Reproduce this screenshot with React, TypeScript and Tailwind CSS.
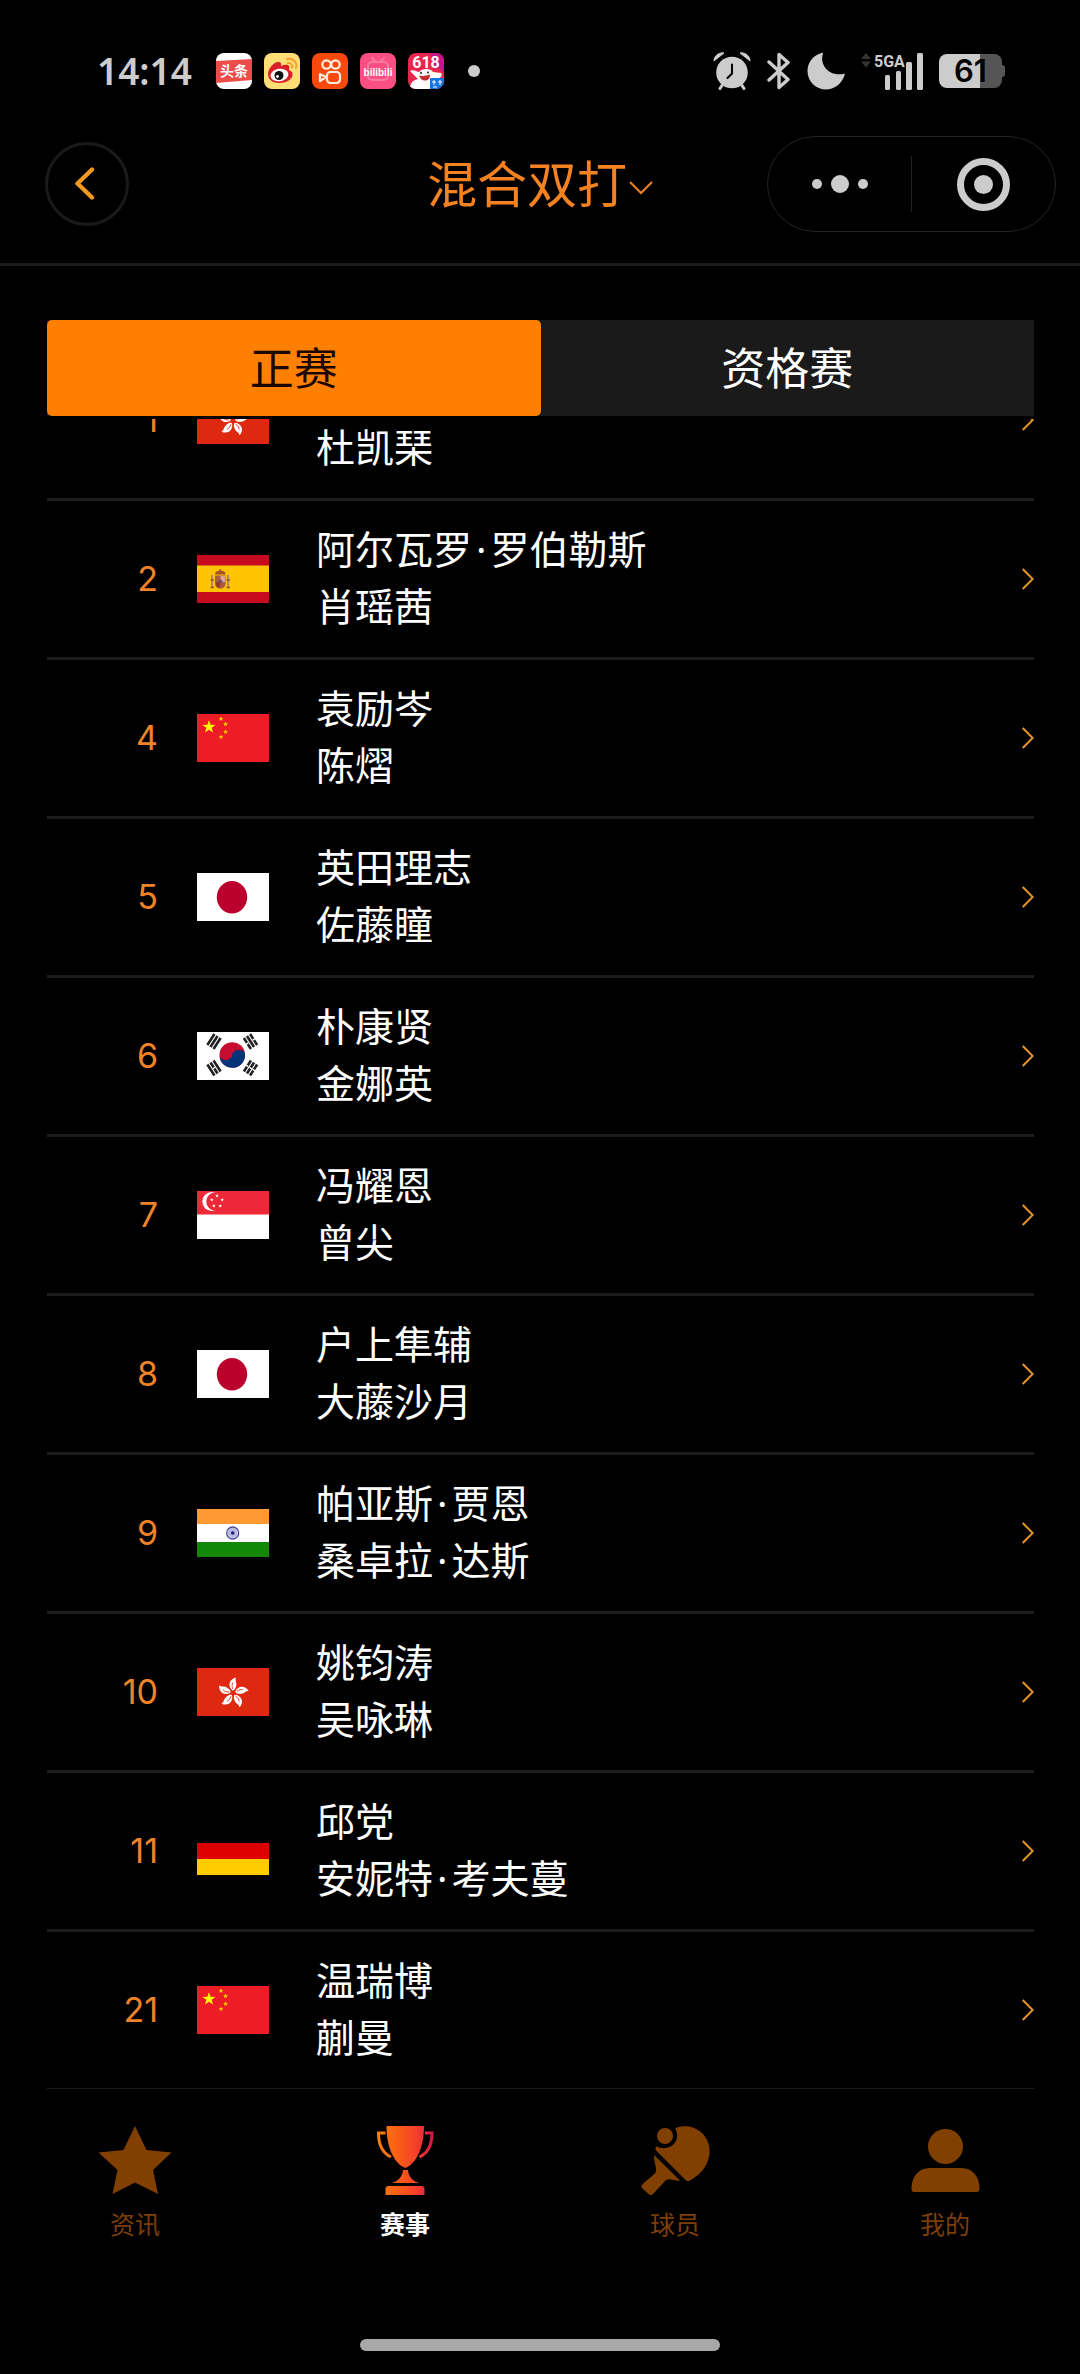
import React, { useState } from "react";

type Country = "hk" | "es" | "cn" | "jp" | "kr" | "sg" | "in" | "de";

const pairs: { rank: number; country: Country; names: string[] }[] = [
  { rank: 1, country: "hk", names: ["", "杜凯琹"] },
  { rank: 2, country: "es", names: ["阿尔瓦罗·罗伯勒斯", "肖瑶茜"] },
  { rank: 4, country: "cn", names: ["袁励岑", "陈熠"] },
  { rank: 5, country: "jp", names: ["英田理志", "佐藤瞳"] },
  { rank: 6, country: "kr", names: ["朴康贤", "金娜英"] },
  { rank: 7, country: "sg", names: ["冯耀恩", "曾尖"] },
  { rank: 8, country: "jp", names: ["户上隼辅", "大藤沙月"] },
  { rank: 9, country: "in", names: ["帕亚斯·贾恩", "桑卓拉·达斯"] },
  { rank: 10, country: "hk", names: ["姚钧涛", "吴咏琳"] },
  { rank: 11, country: "de", names: ["邱党", "安妮特·考夫蔓"] },
  { rank: 21, country: "cn", names: ["温瑞博", "蒯曼"] },
];

// Five pointed star around (cx, cy)
const star = (cx: number, cy: number, r: number) =>
  Array.from({ length: 10 }, (_, i) => {
    const a = (Math.PI / 5) * i - Math.PI / 2;
    const d = i % 2 ? r * 0.4 : r;
    return `${(cx + d * Math.cos(a)).toFixed(2)},${(cy + d * Math.sin(a)).toFixed(2)}`;
  }).join(" ");

const trigrams = [
  { x: 17, y: 9.5, turn: -57, broken: [] as number[] },
  { x: 53.5, y: 9.5, turn: 57, broken: [-4, 4] },
  { x: 17, y: 36, turn: 57, broken: [0] },
  { x: 53.5, y: 36, turn: -57, broken: [-4, 0, 4] },
];

const flags: Record<Country, React.ReactNode> = {
  hk: (
    <>
      <rect width="72" height="48" fill="#de2910" />
      {[0, 72, 144, 216, 288].map((deg) => (
        <g key={deg} transform={`rotate(${deg} 36 25)`}>
          <path d="M35.500 22.500C31 19 31 11.500 39 9.500C37.500 12.500 40.500 14.500 39 18.500C38.300 21 37 22.500 35.500 22.500Z" fill="#fff" />
          <path d="M35.800 21C34.800 18.500 34.800 16.500 36 14.500" stroke="#de2910" strokeWidth="0.8" fill="none" />
        </g>
      ))}
    </>
  ),
  es: (
    <>
      <rect width="72" height="48" fill="#c60b1e" />
      <rect y="10.500" width="72" height="26.500" fill="#ffc400" />
      <path d="M15 20v13M31 20v13" stroke="#b08a5a" strokeWidth="2" />
      <path d="M13.500 25h3.500M29.500 25h3.500M13.500 32.500h3.500M29.500 32.500h3.500" stroke="#a0522d" strokeWidth="1.500" />
      <path d="M18 20.500h10.500v8c0 3-2 5-5.250 5s-5.250-2-5.250-5z" fill="#ad5a3c" />
      <path d="M23.500 21h4.500v6h-4.500z" fill="#d9a79a" />
      <path d="M18.500 27h4.500v5.500c-3-.5-4.500-2-4.500-5.500z" fill="#8f3d20" />
      <circle cx="23.300" cy="26.500" r="2" fill="#7a4a6a" />
      <path d="M18 19.500c0-3 2.500-4 5.250-4s5.250 1 5.250 4z" fill="#a3502b" />
      <path d="M23.250 14v3" stroke="#a3502b" strokeWidth="1.200" />
    </>
  ),
  cn: (
    <>
      <rect width="72" height="48" fill="#ee1c25" />
      <polygon points={star(12, 13, 6.8)} fill="#ffff00" />
      {[[24, 4.8], [28.600, 10.200], [28.600, 17.800], [24, 23]].map(([x, y]) => (
        <polygon key={y} points={star(x, y, 2.6)} fill="#ffd800" />
      ))}
    </>
  ),
  jp: (
    <>
      <rect width="72" height="48" fill="#fff" />
      <ellipse cx="35" cy="24.300" rx="15.200" ry="16.200" fill="#bc002d" />
    </>
  ),
  kr: (
    <>
      <rect width="72" height="48" fill="#fff" />
      <g transform="rotate(-4 35.300 23)">
        <circle cx="35.300" cy="23" r="12.800" fill="#c60c30" />
        <path d="M22.500 23a6.400 4.500 0 0 0 12.800 0a6.400 4.500 0 0 1 12.800 0a12.800 12.800 0 0 1-25.600 0z" fill="#003478" />
      </g>
      {trigrams.map((t) => (
        <g key={`${t.x}-${t.y}`} transform={`translate(${t.x} ${t.y}) rotate(${t.turn})`}>
          <path d="M-6.500 -3.700h13M-6.500 0h13M-6.500 3.700h13" stroke="#222" strokeWidth="2.600" />
          {t.broken.map((y) => (
            <path key={y} d={`M-0.700 ${y}h1.400`} stroke="#fff" strokeWidth="2.800" />
          ))}
        </g>
      ))}
    </>
  ),
  sg: (
    <>
      <rect width="72" height="48" fill="#fff" />
      <rect width="72" height="23.500" fill="#ed2939" />
      <circle cx="14.800" cy="10.500" r="9.500" fill="#fff" />
      <circle cx="18.500" cy="10.500" r="9.300" fill="#ed2939" />
      {[[20, 4.8], [25.200, 8.800], [23.200, 15], [16.800, 15], [14.800, 8.800]].map(([x, y]) => (
        <polygon key={`${x}-${y}`} points={star(x, y, 2)} fill="#fff" />
      ))}
    </>
  ),
  in: (
    <>
      <rect width="72" height="48" fill="#fff" />
      <rect width="72" height="15" fill="#ff9933" />
      <rect y="33" width="72" height="15" fill="#138808" />
      <circle cx="35.700" cy="24" r="5" fill="#b9b9de" />
      <circle cx="35.700" cy="24" r="6" fill="none" stroke="#4a4aa0" strokeWidth="1.300" />
      <circle cx="35.700" cy="24" r="1.800" fill="#20207c" />
    </>
  ),
  de: (
    <>
      <rect width="72" height="48" fill="#000" />
      <rect y="16" width="72" height="16" fill="#dd0000" />
      <rect y="32" width="72" height="16" fill="#ffcc00" />
    </>
  ),
};

const StatusBar = () => (
  <div className="flex items-center justify-between pt-12 pl-[97px] pr-[75px] text-[#cccccc]">
    <div className="flex h-[46px] items-center">
      <span className="text-[37px] leading-[44px] font-semibold">14:14</span>
      <div className="ml-6 flex gap-3">
        <svg className="h-9 w-9 rounded-lg" viewBox="0 0 36 36">
          <rect width="36" height="36" fill="#fff" />
          <path d="M0 8L36 6V27L0 30z" fill="#ec4c4a" />
          <text x="18" y="23" textAnchor="middle" fontSize="14" fontWeight="700" fill="#fff" fontFamily="Noto Sans CJK SC, sans-serif">头条</text>
        </svg>
        <svg className="h-9 w-9 rounded-lg" viewBox="0 0 36 36">
          <rect width="36" height="36" fill="#ffdf75" />
          <path d="M23 6c5-1.500 11 3 9 9" stroke="#f2a12b" strokeWidth="2" fill="none" strokeLinecap="round" />
          <path d="M24 10c3-.5 5 2 4 4.500" stroke="#f2a12b" strokeWidth="2" fill="none" strokeLinecap="round" />
          <path d="M4 21c0-6 7-13 11-12c3 .5 2 3 2 4c3-1.500 7-2 8 0c.7 1.300 0 3 0 4c3 1 4 3 3.500 5.500C27.500 27 22 30 15.500 30S4 27 4 21z" fill="#d9202a" />
          <ellipse cx="15.500" cy="22" rx="9" ry="6.300" fill="#fff" transform="rotate(-8 15.500 22)" />
          <circle cx="15" cy="22.500" r="4.500" fill="#111" />
          <circle cx="13.500" cy="23.500" r="1.400" fill="#fff" />
        </svg>
        <svg className="h-9 w-9 rounded-lg" viewBox="0 0 36 36" fill="none" stroke="#ffeee0" strokeWidth="2.200">
          <rect width="36" height="36" fill="#f8490c" stroke="none" />
          <circle cx="14.500" cy="11.500" r="4.200" />
          <circle cx="23.500" cy="11.500" r="4.200" />
          <rect x="15" y="19" width="13" height="11" rx="3.500" />
          <path d="M14 24l-6-2.800v7z" strokeLinejoin="round" />
        </svg>
        <svg className="h-9 w-9 rounded-lg" viewBox="0 0 36 36">
          <rect width="36" height="36" fill="#fb4f83" />
          <path d="M12 5l4 4M24 5l-4 4" stroke="#fb7aa2" strokeWidth="2" strokeLinecap="round" />
          <rect x="8" y="9" width="20" height="18" rx="4" fill="none" stroke="#fb7aa2" strokeWidth="2" />
          <text x="18" y="23" textAnchor="middle" fontSize="10" fontWeight="700" fill="#fff" fontFamily="Liberation Sans, sans-serif">bilibili</text>
        </svg>
        <svg className="h-9 w-9 rounded-lg" viewBox="0 0 36 36">
          <rect width="36" height="36" fill="#e8264b" />
          <path d="M22 0h14v20L26 12z" fill="#c3158c" />
          <path d="M2 36c0-7 4-9 8-10l-8-8c3-2 7 1 9 1c3-4 12-4 14 0l8 1c2 2 0 5-5 7l2 9z" fill="#fff" />
          <circle cx="13" cy="20" r="1" fill="#222" />
          <circle cx="20" cy="19.500" r="1" fill="#222" />
          <path d="M11 22.500c4 1 8 0 11-1c0 4-2 6-5 6s-5-2-6-5z" fill="#c02f33" />
          <text x="18" y="15" textAnchor="middle" fontSize="16" fontWeight="700" fill="#fff" fontFamily="Roboto, sans-serif">618</text>
          <rect x="22" y="25" width="14" height="11" fill="#1673e0" />
          <path d="M24 29h4M26 27v5M30 29h4M32 27v5M25 34h4" stroke="#fff" strokeWidth="1" />
        </svg>
      </div>
      <span className="ml-6 h-3 w-3 rounded-full bg-[#cccccc]" />
    </div>

    <div className="flex h-[46px] items-center">
      <svg className="h-[38px] w-[38px]" viewBox="0 0 38 38">
        <path d="M1 9C1 4 6 0 11 1zM37 9C37 4 32 0 27 1z" fill="#ccc" stroke="#ccc" strokeLinejoin="round" />
        <path d="M10 32l-3 4.500M28 32l3 4.500" stroke="#ccc" strokeWidth="3" strokeLinecap="round" />
        <circle cx="19" cy="20.500" r="15.800" fill="#ccc" />
        <path d="M19 12.500v9l-4.500 4.500" stroke="#000" strokeWidth="2" fill="none" strokeLinecap="round" />
      </svg>
      <svg className="ml-4 h-[38px] w-6" viewBox="0 0 24 38" fill="none" stroke="#ccc" strokeWidth="3.400" strokeLinejoin="round" strokeLinecap="round">
        <path d="M2 10l19 17.500L12 35.500V2.500l9 8L2 28" />
      </svg>
      <svg className="ml-4 h-[38px] w-[38px]" viewBox="0 0 38 38">
        <path d="M16 1.500C12.500 11 20 24.500 36 22C37.500 21.500 38 22 37.500 23.500C34.500 32 27 37.500 19 37.500C9 37.500 .5 29.500 .5 19C.5 10 6.500 3 14.500 1C15.700 .7 16.200 .8 16 1.500z" fill="#ccc" />
      </svg>
      <svg className="ml-4 h-[38px] w-[62px]" viewBox="0 0 62 38">
        <path d="M0 7l5-6 5 6zM0 9.500l5 6 5-6z" fill="#333" />
        <text x="13" y="15" fontSize="16" fontWeight="700" fill="#ccc" fontFamily="Roboto, sans-serif">5GA</text>
        <g fill="#ccc">
          <rect x="24" y="23" width="5" height="15" rx="1.500" />
          <rect x="35" y="19" width="5" height="19" rx="1.500" />
          <rect x="45" y="10" width="6" height="28" rx="1.500" />
          <rect x="56" y="1" width="6" height="37" rx="1.500" />
        </g>
      </svg>
      <div className="ml-4 flex items-center">
        <div className="flex h-[34px] w-[63px] items-center justify-center rounded-lg bg-linear-to-r from-[#cccccc] from-65% to-[#555555] to-65% font-['Inter',sans-serif] text-[31px] font-semibold text-black">
          61
        </div>
        <div className="h-3 w-[3px] rounded-r-sm bg-[#555555]" />
      </div>
    </div>
  </div>
);

const Header = () => (
  <header className="grid grid-cols-[1fr_auto_1fr] items-center border-b-3 border-[#1c1c1c] px-6 pt-[42px] pb-[31px]">
    <button aria-label="返回" className="ml-[21px] flex h-[84px] w-[84px] items-center justify-center rounded-full border-3 border-[#1a1a1a]">
      <svg className="h-9 w-6" viewBox="0 0 24 36" fill="none" stroke="#f0991e" strokeWidth="4.400" strokeLinecap="round" strokeLinejoin="round">
        <path d="M17 3.500L2.500 17.500L17 31.500" />
      </svg>
    </button>
    <h1>
      <button className="flex items-center gap-[2px] text-[50px] leading-[60px] text-[#f58220]">
        混合双打
        <svg className="mt-2 h-[14px] w-6" viewBox="0 0 24 14" fill="none" stroke="currentColor" strokeWidth="2">
          <path d="M1 1l11 11L23 1" />
        </svg>
      </button>
    </h1>
    <div className="flex h-24 w-[289px] items-center justify-self-end rounded-full border border-[#232323]">
      <button aria-label="更多" className="flex flex-1 items-center justify-center gap-[9px]">
        <span className="h-[10px] w-[10px] rounded-full bg-[#cccccc]" />
        <span className="h-[18px] w-[18px] rounded-full bg-[#cccccc]" />
        <span className="h-[10px] w-[10px] rounded-full bg-[#cccccc]" />
      </button>
      <span className="h-14 w-px bg-[#232323]" />
      <button aria-label="关闭" className="flex flex-1 items-center justify-center">
        <span className="flex h-[53px] w-[53px] items-center justify-center rounded-full border-7 border-[#cccccc]">
          <span className="h-[19px] w-[19px] rounded-full bg-[#cccccc]" />
        </span>
      </button>
    </div>
  </header>
);

// The middle dot of a transliterated name stands with some air on both sides
const PlayerName = ({ name }: { name: string }) => (
  <span className="block h-[57px]">
    {name.split("·").map((part, i) => (
      <React.Fragment key={part}>
        {i > 0 && <span className="mx-1">·</span>}
        {part}
      </React.Fragment>
    ))}
  </span>
);

const navItems = [
  {
    label: "资讯",
    icon: <path d="M36 2L47.500 26L72.500 28.500L54 46L59 70L36 58.500L13.500 70L18.500 46L-.5 28.500L24.500 26z" fill="#824000" />,
  },
  {
    label: "赛事",
    icon: (
      <>
        <defs>
          <linearGradient id="cup" gradientUnits="userSpaceOnUse" x1="8" y1="0" x2="64" y2="0">
            <stop offset="0" stopColor="#f5820f" />
            <stop offset="0.3" stopColor="#fb6414" />
            <stop offset="0.7" stopColor="#f5402a" />
            <stop offset="1" stopColor="#d81348" />
          </linearGradient>
        </defs>
        <path d="M17.500 2h37.500c0 22-8 38-18.700 42C25.500 40 17.500 24 17.500 2z" fill="url(#cup)" />
        <path d="M16.500 9H9.500c0 12 4 20 12.500 24M56 9h7c0 12-4 20-12.500 24" fill="none" stroke="url(#cup)" strokeWidth="3" />
        <path d="M34 46h5c.5 6 4 11 11 13H23c7-2 10.500-7 11-13z" fill="url(#cup)" />
        <path d="M16.500 71v-6a3 3 0 0 1 3-3h33a3 3 0 0 1 3 3v6z" fill="url(#cup)" />
      </>
    ),
  },
  {
    label: "球员",
    icon: (
      <g fill="#824000">
        <circle cx="26" cy="12" r="8" />
        <path d="M36.500 4C46 .5 56 2 64 10C72 19 72 30 68 39C64 48 57 53 51 56.500C49 57.500 47.500 57 46 55.500L17.500 27C16 25.500 16 23 18 22.500C29 28 42 19 37 6.500z" />
        <path d="M15 31L41 56.500C35 57.500 31 54 27 56L14 70C12.500 71.500 11 71.500 9.500 70L3.500 64.500C2 63 2 61.500 3.500 60L16 49.500C19 46 15 40 15 31z" />
      </g>
    ),
  },
  {
    label: "我的",
    icon: (
      <g fill="#824000">
        <circle cx="36.500" cy="22.500" r="17.500" />
        <path d="M21 44h31c12 0 18.500 9 18.500 20.500c0 2.500-.8 3.500-3 3.500h-62c-2.200 0-3-1-3-3.500C2.500 53 9 44 21 44z" />
      </g>
    ),
  },
];

const App = () => {
  const [tab, setTab] = useState("正赛");
  const [page, setPage] = useState("赛事");

  return (
    <div className="flex min-h-screen flex-col bg-black font-['Noto_Sans','Noto_Sans_CJK_SC',sans-serif] text-white">
      <StatusBar />
      <Header />

      <main className="pt-[54px] pr-[46px] pl-[47px]">
        {/* Draw tabs */}
        <div className="flex bg-[#1a1a1a]">
          {["正赛", "资格赛"].map((item) => (
            <button
              key={item}
              onClick={() => setTab(item)}
              className={`h-24 flex-1 rounded-[5px] text-[44px] leading-[60px] ${
                tab === item ? "bg-[#ff8000] text-[#1a0500]" : "text-white"
              }`}
            >
              {item}
            </button>
          ))}
        </div>

        {/* Seed list, first row scrolled under the tabs */}
        <div className="mt-[3px] overflow-hidden">
          <ul className="-mt-[77px]">
            {pairs.map((pair) => (
              <li key={pair.rank} className="border-b-3 border-[#1c1c1c] last:border-b-0">
                <a href="#" className="flex h-39 items-center">
                  <span className="mr-[39px] w-[111px] text-right font-['Inter',sans-serif] text-[34px] leading-[40px] text-[#f08228]">
                    {pair.rank}
                  </span>
                  <svg className="h-12 w-[72px]" viewBox="0 0 72 48">
                    {flags[pair.country]}
                  </svg>
                  <span className="ml-[47px] flex-1 pb-1 text-[39px] leading-[57px]">
                    {pair.names.map((name) => (
                      <PlayerName key={name} name={name} />
                    ))}
                  </span>
                  <svg className="h-[22px] w-3" viewBox="0 0 12 22" fill="none" stroke="#e8932c" strokeWidth="2">
                    <path d="M.7 1L10.700 11L.7 21" />
                  </svg>
                </a>
              </li>
            ))}
          </ul>
        </div>
        <div className="h-px bg-[#1c1c1c]" />
      </main>

      {/* Bottom navigation */}
      <nav className="flex pt-[35px]">
        {navItems.map((item) => (
          <button
            key={item.label}
            onClick={() => setPage(item.label)}
            className={`flex flex-1 flex-col items-center gap-[10px] text-[25px] leading-[36px] ${
              page === item.label ? "font-bold text-white" : "text-[#7d3e06]"
            }`}
          >
            <svg className="h-[72px] w-[72px] overflow-visible" viewBox="0 0 72 72">
              {item.icon}
            </svg>
            {item.label}
          </button>
        ))}
      </nav>

      <div className="mx-auto mt-[97px] mb-[23px] h-3 w-1/3 rounded-full bg-[#a8a8a8]" />
    </div>
  );
};

export default App;
